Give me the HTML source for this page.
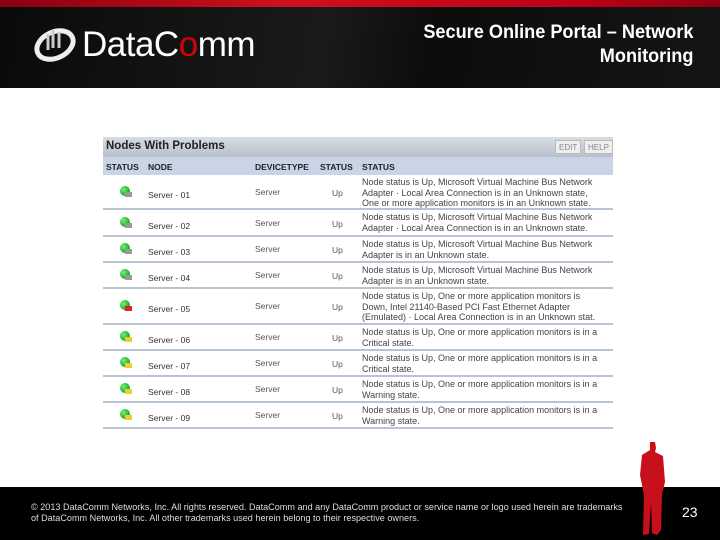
<!DOCTYPE html>
<html><head><meta charset="utf-8"><style>
*{margin:0;padding:0;box-sizing:border-box}
body{width:720px;height:540px;position:relative;background:#fff;font-family:"Liberation Sans",sans-serif;overflow:hidden}
.hdr{position:absolute;left:0;top:0;width:720px;height:88px;background:linear-gradient(100deg,#0a0a0a 0%,#1a1a1a 45%,#0c0c0c 60%,#151515 100%)}
.red{position:absolute;left:0;top:0;width:720px;height:7px;background:linear-gradient(90deg,#8a0010,#d0101c 40%,#c00018 80%,#900010)}
.title{position:absolute;right:27px;top:20px;color:#fff;font-size:19.5px;font-weight:bold;text-align:right;line-height:24px;transform:scaleX(0.93);transform-origin:right}
.logo{position:absolute;left:82px;top:25px;color:#fff;font-size:35px;letter-spacing:-0.5px;line-height:40px}
.ftr{position:absolute;left:0;top:487px;width:720px;height:53px;background:#000}
.copy{position:absolute;left:31px;top:502px;color:#ddd;font-size:9.1px;line-height:11px;white-space:nowrap}
.pg{position:absolute;left:682px;top:504px;color:#fff;font-size:14px}
.t{position:absolute;left:103px;top:137px;width:510px}
.th{height:20px;background:linear-gradient(#d8dde4,#b9c0ca);font-weight:bold;font-size:11.5px;padding:3px 3px;color:#222;position:relative}
.btn{position:absolute;top:3px;height:14px;background:#eee;border:1px solid #bbb;font-size:8px;color:#888;font-weight:normal;padding:2px 3px}
.ch{height:18px;background:#c9d5e6;font-size:8.5px;font-weight:bold;color:#222;position:relative}
.ch span,.r span{position:absolute}
.r{position:relative;border-bottom:2px solid #b8c4d4;font-size:8.5px;color:#333}
.r .st{left:259px;color:#444;line-height:10.5px;white-space:nowrap;font-size:9px}
.ic{position:absolute;left:17px;width:12px;height:12px}
.ic b{position:absolute;left:0;top:0;width:10px;height:10px;border-radius:50%;background:radial-gradient(circle at 35% 35%,#7e7,#1a2 70%)}
.ic i{position:absolute;left:5px;top:6px;width:7px;height:5px;background:#999}
</style></head><body>
<div class="hdr"></div><div class="red"></div>
<svg style="position:absolute;left:33px;top:24px" width="48" height="40" viewBox="0 0 48 40"><ellipse cx="22" cy="21" rx="19" ry="13" fill="none" stroke="#eee" stroke-width="5" transform="rotate(-25 22 21)"/><path d="M15 10v16M20 6v18M26 8v16" stroke="#ccc" stroke-width="3"/></svg>
<div class="logo">DataC<span style="color:#d00">o</span>mm</div>
<div class="title">Secure Online Portal – Network<br>Monitoring</div>
<div class="t">
<div class="th">Nodes With Problems<span class="btn" style="left:452px">EDIT</span><span class="btn" style="left:481px">HELP</span></div>
<div class="ch"><span style="left:3px;top:5px">STATUS</span><span style="left:45px;top:5px">NODE</span><span style="left:152px;top:5px">DEVICETYPE</span><span style="left:217px;top:5px">STATUS</span><span style="left:259px;top:5px">STATUS</span></div>
<div id="rows"></div>
</div>
<div class="ftr"></div>
<svg style="position:absolute;left:636px;top:440px" width="32" height="96" viewBox="0 0 32 96"><path d="M14 2h5l1 6-1 4 8 4 2 26-3 12-1 36-4 5-5-2-1-30-2 31-6 1 1-40-4-20 2-20 8-5z" fill="#c8101c"/></svg>
<div class="copy">© 2013 DataComm Networks, Inc. All rights reserved. DataComm and any DataComm product or service name or logo used herein are trademarks<br>of DataComm Networks, Inc. All other trademarks used herein belong to their respective owners.</div>
<div class="pg">23</div>
<script>
var d=[[35,"01","#999","Node status is Up, Microsoft Virtual Machine Bus Network<br>Adapter · Local Area Connection is in an Unknown state,<br>One or more application monitors is in an Unknown state."],
[27,"02","#999","Node status is Up, Microsoft Virtual Machine Bus Network<br>Adapter · Local Area Connection is in an Unknown state."],
[26,"03","#999","Node status is Up, Microsoft Virtual Machine Bus Network<br>Adapter is in an Unknown state."],
[26,"04","#999","Node status is Up, Microsoft Virtual Machine Bus Network<br>Adapter is in an Unknown state."],
[36,"05","#d22","Node status is Up, One or more application monitors is<br>Down, Intel 21140-Based PCI Fast Ethernet Adapter<br>(Emulated) · Local Area Connection is in an Unknown stat."],
[26,"06","#ec3","Node status is Up, One or more application monitors is in a<br>Critical state."],
[26,"07","#ec3","Node status is Up, One or more application monitors is in a<br>Critical state."],
[26,"08","#ec3","Node status is Up, One or more application monitors is in a<br>Warning state."],
[26,"09","#ec3","Node status is Up, One or more application monitors is in a<br>Warning state."]];
var h="";d.forEach(function(r){var m=r[0]/2;h+='<div class="r" style="height:'+r[0]+'px"><div class="ic" style="top:'+(m-7)+'px"><b></b><i style="background:'+r[2]+'"></i></div><span style="left:45px;top:'+(m-3)+'px">Server - '+r[1]+'</span><span style="left:152px;top:'+(m-6)+'px;color:#555">Server</span><span style="left:229px;top:'+(m-5)+'px;color:#555">Up</span><span class="st" style="top:2px">'+r[3]+'</span></div>'});
document.getElementById("rows").innerHTML=h;
</script>
</body></html>
